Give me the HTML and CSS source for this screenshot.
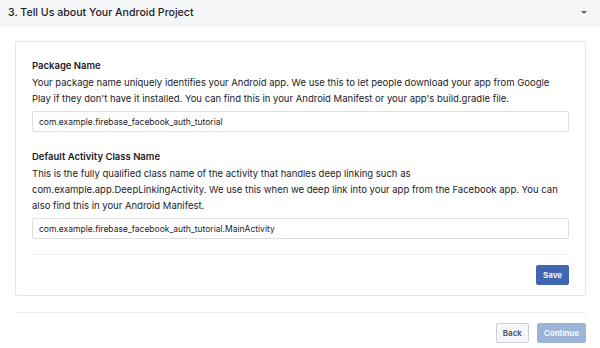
FILE: index.html
```html
<!DOCTYPE html>
<html lang="en">
<head>
    <meta charset="UTF-8">
    <title>Tell Us about Your Android Project</title>
    <link rel="stylesheet" href="styles.css">
</head>
<body>
    <div class="step-head">
        <span class="step-title">3. Tell Us about Your Android Project</span>
        <span class="caret"></span>
    </div>
    <div class="step-body">
        <div class="card">
            <div class="field">
                <div class="label">Package Name</div>
                <div class="desc">Your package name uniquely identifies your Android app. We use this to let people download your app from Google Play if they don't have it installed. You can find this in your Android Manifest or your app's build.gradle file.</div>
                <input class="text-input" type="text" value="com.example.firebase_facebook_auth_tutorial">
            </div>
            <div class="field">
                <div class="label">Default Activity Class Name</div>
                <div class="desc">This is the fully qualified class name of the activity that handles deep linking such as com.example.app.DeepLinkingActivity. We use this when we deep link into your app from the Facebook app. You can also find this in your Android Manifest.</div>
                <input class="text-input" type="text" value="com.example.firebase_facebook_auth_tutorial.MainActivity">
            </div>
            <div class="card-foot">
                <button class="btn btn-primary">Save</button>
            </div>
        </div>
        <div class="step-nav">
            <button class="btn btn-default">Back</button>
            <button class="btn btn-primary" disabled>Continue</button>
        </div>
    </div>
</body>
</html>
```

FILE: styles.css
```css
body{
    margin: 0;
    background-color: #fff;
    color: #1d2129;
    font-family: Inter, "Liberation Sans", sans-serif;
}
.step-head{
    display: flex;
    align-items: center;
    height: 25px;
    padding: 0 13px 0 8px;
    background-color: #f5f6f7;
    border-bottom: 1px solid #eceef1;
}
.step-title{
    font-size: 10.6px;
    font-weight: 500;
}
.caret{
    margin-left: auto;
    width: 0;
    height: 0;
    border-left: 3px solid transparent;
    border-right: 3px solid transparent;
    border-top: 3px solid #606770;
}
.step-body{
    padding: 15px 14px 0 15px;
}
.card{
    padding: 17px 16px 10px 16px;
    border: 1px solid #e4e6e9;
    border-radius: 2px;
}
.field + .field{
    margin-top: 18px;
}
.label{
    font-size: 9.5px;
    font-weight: 600;
    line-height: 14px;
    margin-bottom: 2px;
}
.desc{
    font-size: 9.5px;
    line-height: 16px;
    margin-bottom: 4px;
}
.text-input{
    display: block;
    box-sizing: border-box;
    width: 100%;
    height: 21px;
    padding: 0 6px;
    border: 1px solid #dddfe2;
    border-radius: 2px;
    font-family: Inter, "Liberation Sans", sans-serif;
    font-size: 8.5px;
    color: #1d2129;
}
.card-foot{
    display: flex;
    justify-content: flex-end;
    margin-top: 15px;
    padding-top: 10px;
    border-top: 1px solid #e9ebee;
}
.btn{
    height: 20px;
    padding: 0 6px;
    border: 1px solid;
    border-radius: 2px;
    font-family: Inter, "Liberation Sans", sans-serif;
    font-size: 8px;
    font-weight: 600;
}
.btn-primary{
    background-color: #4267b2;
    border-color: #4267b2;
    color: #fff;
}
.btn-primary:disabled{
    background-color: #9cb4d8;
    border-color: #9cb4d8;
}
.btn-default{
    background-color: #f5f6f7;
    border-color: #ccd0d5;
    color: #4b4f56;
}
.step-nav{
    display: flex;
    justify-content: flex-end;
    gap: 8px;
    margin-top: 16px;
    padding-top: 10px;
    border-top: 1px solid #e9ebee;
}
```
